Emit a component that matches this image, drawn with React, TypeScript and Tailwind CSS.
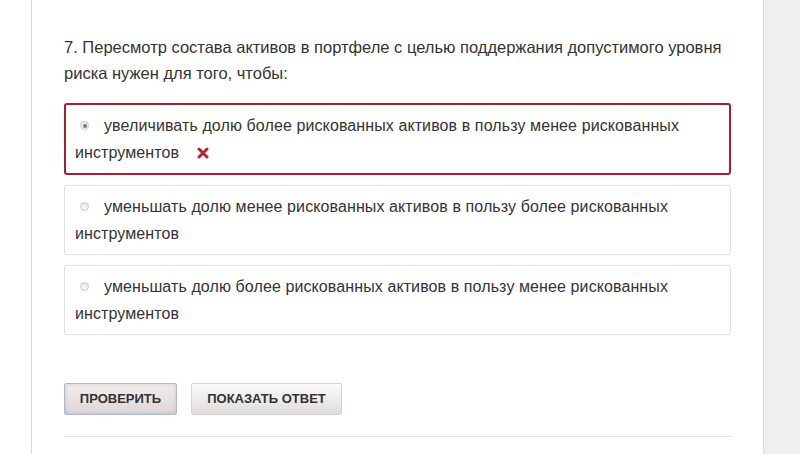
import React from 'react';

type Option = { text: string; selected?: boolean; wrong?: boolean };

const options: Option[] = [
  {
    text: 'увеличивать долю более рискованных активов в пользу менее рискованных инструментов',
    selected: true,
    wrong: true,
  },
  { text: 'уменьшать долю менее рискованных активов в пользу более рискованных инструментов' },
  { text: 'уменьшать долю более рискованных активов в пользу менее рискованных инструментов' },
];

const Radio = ({ checked }: { checked?: boolean }) => (
  <span className="inline-flex items-center justify-center w-[9px] h-[9px] rounded-full border border-[#c8c8c8] bg-gradient-to-b from-[#e6e6e6] to-[#fafafa] align-middle ml-[5px] mr-[15px] relative -top-[1px]">
    {checked && <span className="w-[4px] h-[4px] rounded-full bg-[#777]" />}
  </span>
);

const WrongMark = () => (
  <svg width="12" height="12" viewBox="0 0 12 12" className="inline-block align-middle ml-[18px] relative -top-[1px]">
    <path d="M2 2 L10 10 M10 2 L2 10" stroke="#b3242e" strokeWidth="3" strokeLinecap="round" />
  </svg>
);

export default function App() {
  return (
    <div className="flex w-[800px] h-[454px] bg-white overflow-hidden" style={{ fontFamily: '"Liberation Sans", Arial, sans-serif' }}>
      <div className="w-[31px] shrink-0 bg-white" />
      <div className="w-[733px] shrink-0 border-l border-r border-[#d6d6d6] bg-white px-[32px] pt-[34px] text-[#333]">
        <p className="text-[16.5px] leading-[26px]">
          7. Пересмотр состава активов в портфеле с целью поддержания допустимого уровня риска нужен для того, чтобы:
        </p>

        <div className="mt-[17px] flex flex-col gap-[10px]">
          {options.map((o, i) => (
            <div
              key={i}
              className={
                o.wrong
                  ? 'border-2 border-[#a3202e] rounded-[3px] pl-[9px] pr-[40px] py-[7px] text-[16px] leading-[27px] tracking-[0.1px]'
                  : 'border border-[#e0e0e0] rounded-[2px] pl-[10px] pr-[40px] py-[7px] text-[16px] leading-[27px] tracking-[0.1px]'
              }
            >
              <Radio checked={o.selected} />
              {o.text}
              {o.wrong && <WrongMark />}
            </div>
          ))}
        </div>

        <div className="mt-[48px] flex gap-[14px]">
          <button className="h-[32px] w-[113px] rounded-[2px] border border-[#a9b9d6] bg-gradient-to-b from-[#f2eeee] to-[#ddd6d6] shadow-[inset_0_0_4px_rgba(160,120,120,0.35)] text-[13px] font-bold text-[#333]">
            ПРОВЕРИТЬ
          </button>
          <button className="h-[32px] w-[151px] rounded-[2px] border border-[#d4d4d4] bg-gradient-to-b from-[#fbfbfb] to-[#e0dcdc] text-[13px] font-bold text-[#333]">
            ПОКАЗАТЬ ОТВЕТ
          </button>
        </div>

        <div className="mt-[21px] border-t border-[#e4e4e4]" />
      </div>
      <div className="flex-1 bg-[#efefef]" />
    </div>
  );
}
